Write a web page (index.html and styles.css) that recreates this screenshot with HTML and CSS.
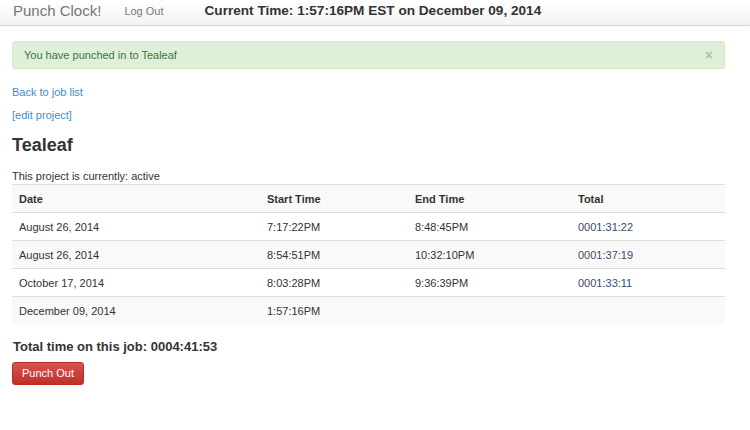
FILE: index.html
```html
<!DOCTYPE html>
<html>
<head>
<meta charset="utf-8">
<link rel="stylesheet" href="styles.css">
</head>
<body>
<nav class="navbar">
  <span class="brand">Punch Clock!</span>
  <a class="nav-link" href="#">Log Out</a>
  <span class="clock">Current Time: 1:57:16PM EST on December 09, 2014</span>
</nav>
<main class="container">
  <div class="alert">
    <span>You have punched in to Tealeaf</span>
    <span class="close">×</span>
  </div>
  <p class="link-line first"><a href="#">Back to job list</a></p>
  <p class="link-line"><a href="#">[edit project]</a></p>
  <h2 class="title">Tealeaf</h2>
  <p class="status">This project is currently: active</p>
  <table class="jobs">
    <thead>
      <tr><th class="c1">Date</th><th class="c2">Start Time</th><th class="c3">End Time</th><th class="c4">Total</th></tr>
    </thead>
    <tbody>
      <tr><td>August 26, 2014</td><td>7:17:22PM</td><td>8:48:45PM</td><td class="total">0001:31:22</td></tr>
      <tr><td>August 26, 2014</td><td>8:54:51PM</td><td>10:32:10PM</td><td class="total">0001:37:19</td></tr>
      <tr><td>October 17, 2014</td><td>8:03:28PM</td><td>9:36:39PM</td><td class="total">0001:33:11</td></tr>
      <tr><td>December 09, 2014</td><td>1:57:16PM</td><td></td><td class="total"></td></tr>
    </tbody>
  </table>
  <h4 class="sum">Total time on this job: 0004:41:53</h4>
  <button class="btn-danger">Punch Out</button>
</main>
</body>
</html>
```
FILE: styles.css
```css
* { box-sizing: border-box; }
body {
  margin: 0;
  font-family: "Liberation Sans", Arial, sans-serif;
  font-size: 11px;
  line-height: 16px;
  color: #333;
  background: #fff;
}
a { color: #428bca; text-decoration: none; }

.navbar {
  height: 26px;
  display: flex;
  align-items: center;
  padding: 0 12px 4px 13px;
  background: linear-gradient(to bottom, #ffffff 0%, #f3f3f3 100%);
  border-bottom: 1px solid #d9d9d9;
  box-shadow: 0 1px 2px rgba(0,0,0,0.04);
}
.brand {
  font-size: 15px;
  color: #777;
  line-height: 18px;
}
.nav-link {
  margin-left: 23px;
  font-size: 11px;
  color: #777;
}
.clock {
  margin-left: 41px;
  font-size: 13.6px;
  font-weight: bold;
  color: #333;
}

.container {
  padding: 0 25px 0 12px;
}
.alert {
  margin-top: 15px;
  display: flex;
  justify-content: space-between;
  align-items: center;
  padding: 5px 11px 5px 11px;
  background: #dff0d8;
  border: 1px solid #d6e9c6;
  border-radius: 3px;
  color: #3c763d;
}
.close {
  font-size: 14px;
  font-weight: bold;
  color: #000;
  opacity: 0.2;
  line-height: 16px;
}
.link-line {
  margin: 7px 0 0;
}
.link-line.first { margin-top: 15px; }
.title {
  margin: 12px 0 0;
  font-size: 18px;
  line-height: 20px;
  font-weight: bold;
  color: #333;
}
.status { margin: 13px 0 0; }

.jobs {
  width: 100%;
  border-collapse: collapse;
  border-spacing: 0;
}
.jobs th, .jobs td {
  text-align: left;
  padding: 6px 7px 5px;
  line-height: 16px;
  border-top: 1px solid #dddddd;
}
.jobs th { font-weight: bold; }
.jobs thead tr { background: #f9f9f9; }
.jobs tbody tr:nth-child(even) { background: #f9f9f9; }
.c1 { width: 248px; }
.c2 { width: 148px; }
.c3 { width: 163px; }
.total { color: #3d4b63; }

.sum {
  margin: 15px 0 0 1px;
  font-size: 13px;
  line-height: 16px;
  font-weight: bold;
}
.btn-danger {
  margin-top: 7px;
  display: block;
  font-family: "Liberation Sans", Arial, sans-serif;
  font-size: 11px;
  line-height: 15px;
  padding: 3px 9px;
  color: #fff;
  background: linear-gradient(to bottom, #d9534f 0%, #c12e2a 100%);
  border: 1px solid #b92c28;
  border-radius: 3px;
  box-shadow: 0 1px 1px rgba(0,0,0,0.08);
}
```
